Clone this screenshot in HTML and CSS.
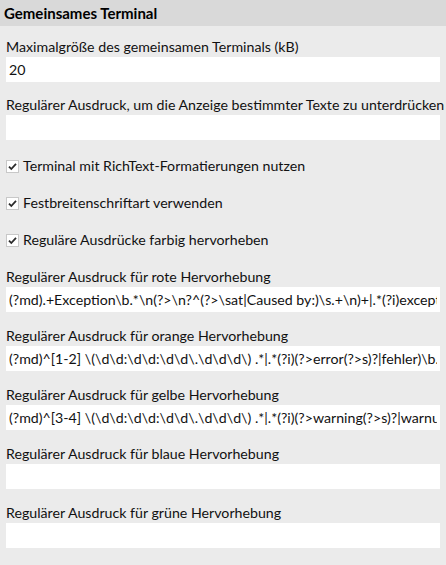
FILE: index.html
```html
<!DOCTYPE html>
<html lang="de">
<head>
<meta charset="utf-8">
<title>Gemeinsames Terminal</title>
<link rel="stylesheet" href="styles.css">
</head>
<body>
<div class="panel">
  <div class="header">Gemeinsames Terminal</div>
  <div class="content">
    <div class="field">
      <label class="label">Maximalgröße des gemeinsamen Terminals (kB)</label>
      <input class="input" type="text" value="20">
    </div>
    <div class="field">
      <label class="label">Regulärer Ausdruck, um die Anzeige bestimmter Texte zu unterdrücken</label>
      <input class="input" type="text" value="">
    </div>
    <div class="checks">
      <div class="check"><span class="box"><svg viewBox="0 0 13 13" width="13" height="13"><path d="M3 6.6 L5.3 9 L10 3.8" fill="none" stroke="#2b2b2b" stroke-width="1.8"/></svg></span><span>Terminal mit RichText-Formatierungen nutzen</span></div>
      <div class="check"><span class="box"><svg viewBox="0 0 13 13" width="13" height="13"><path d="M3 6.6 L5.3 9 L10 3.8" fill="none" stroke="#2b2b2b" stroke-width="1.8"/></svg></span><span>Festbreitenschriftart verwenden</span></div>
      <div class="check"><span class="box"><svg viewBox="0 0 13 13" width="13" height="13"><path d="M3 6.6 L5.3 9 L10 3.8" fill="none" stroke="#2b2b2b" stroke-width="1.8"/></svg></span><span>Reguläre Ausdrücke farbig hervorheben</span></div>
    </div>
    <div class="field tight">
      <label class="label">Regulärer Ausdruck für rote Hervorhebung</label>
      <input class="input" type="text" value="(?md).+Exception\b.*\n(?>\n?^(?>\sat|Caused by:)\s.+\n)+|.*(?i)exception.*">
    </div>
    <div class="field tight">
      <label class="label">Regulärer Ausdruck für orange Hervorhebung</label>
      <input class="input" type="text" value="(?md)^[1-2] \(\d\d:\d\d:\d\d\.\d\d\d\) .*|.*(?i)(?>error(?>s)?|fehler)\b.*">
    </div>
    <div class="field tight">
      <label class="label">Regulärer Ausdruck für gelbe Hervorhebung</label>
      <input class="input" type="text" value="(?md)^[3-4] \(\d\d:\d\d:\d\d\.\d\d\d\) .*|.*(?i)(?>warning(?>s)?|warnung(?>en)?)\b.*">
    </div>
    <div class="field tight">
      <label class="label">Regulärer Ausdruck für blaue Hervorhebung</label>
      <input class="input" type="text" value="">
    </div>
    <div class="field tight">
      <label class="label">Regulärer Ausdruck für grüne Hervorhebung</label>
      <input class="input" type="text" value="">
    </div>
  </div>
</div>
</body>
</html>
```

FILE: styles.css
```css
html, body {
  margin: 0;
  padding: 0;
  background: #ebebeb;
}
body {
  font-family: "Lato", "Noto Sans", sans-serif;
  font-size: 14.2px;
  color: #111;
  width: 446px;
  height: 565px;
  overflow: hidden;
}
.header {
  height: 26px;
  background: #d9d9d9;
  font-weight: bold;
  font-size: 15px;
  line-height: 26px;
  padding-left: 4px;
  color: #000;
}
.content {
  padding: 12px 6px 0 6px;
  display: flex;
  flex-direction: column;
}
.field {
  display: flex;
  flex-direction: column;
  margin-bottom: 14px;
}
.field.tight {
  margin-bottom: 15px;
}
.label {
  display: block;
  line-height: 18px;
  height: 18px;
  margin-bottom: 1px;
  white-space: nowrap;
}
.input {
  display: block;
  box-sizing: border-box;
  width: 100%;
  height: 25px;
  border: none;
  outline: none;
  background: #fff;
  padding: 0 3px;
  margin: 0;
  font-family: inherit;
  font-size: 14.2px;
  color: #111;
}
.checks {
  display: flex;
  flex-direction: column;
  gap: 19px;
  margin-top: 3px;
  margin-bottom: 19px;
}
.check {
  display: flex;
  align-items: center;
  gap: 4px;
  height: 18px;
  line-height: 18px;
  white-space: nowrap;
}
.box {
  display: inline-flex;
  box-sizing: border-box;
  width: 13px;
  height: 13px;
  background: #fff;
  border: 1px solid #c8c8c8;
  align-items: center;
  justify-content: center;
}
.box svg {
  display: block;
  margin: -1px;
}
```
